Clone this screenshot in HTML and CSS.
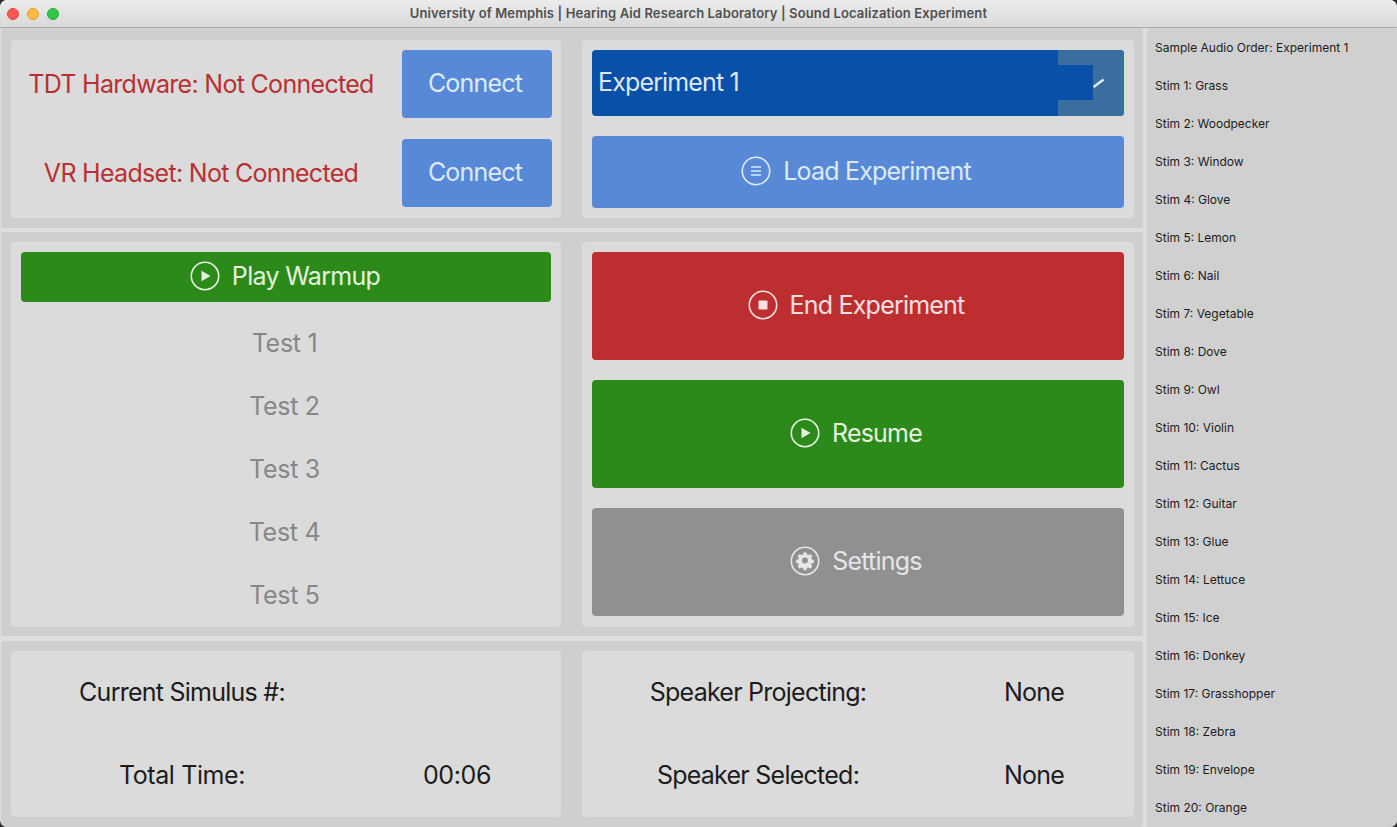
FILE: index.html
```html
<!DOCTYPE html>
<html lang="en">
<head>
<meta charset="utf-8">
<title>Sound Localization Experiment</title>
<link rel="stylesheet" href="styles.css">
</head>
<body>
<div class="window">
  <header class="titlebar">
    <div class="lights"><span class="light red"></span><span class="light yellow"></span><span class="light green"></span></div>
    <div class="title">University of Memphis | Hearing Aid Research Laboratory | Sound Localization Experiment</div>
  </header>
  <div class="content">
    <main class="main">
      <section class="panel panel-top">
        <div class="card conn">
          <div class="status">TDT Hardware: Not Connected</div>
          <button class="btn blue">Connect</button>
          <div class="status">VR Headset: Not Connected</div>
          <button class="btn blue">Connect</button>
        </div>
        <div class="card exp">
          <div class="select">
            <span class="select-text">Experiment 1</span>
            <span class="select-arrow"><span class="arrow-block"></span><svg class="arrow-mark" width="11" height="10" viewBox="0 0 11 10"><path d="M0.5 9 L10.5 1.5" stroke="#dfeafa" stroke-width="2.4"/></svg></span>
          </div>
          <button class="btn blue load">
            <svg class="ico" viewBox="0 0 30 30"><circle cx="15" cy="15" r="13.7" fill="none" stroke="currentColor" stroke-width="1.6"/><path d="M10 11h10M10 15h10M10 19h10" stroke="currentColor" stroke-width="1.7" fill="none"/></svg>
            Load Experiment
          </button>
        </div>
      </section>
      <section class="panel panel-mid">
        <div class="card tests">
          <button class="btn green warmup">
            <svg class="ico" viewBox="0 0 30 30"><circle cx="15" cy="15" r="13.7" fill="none" stroke="currentColor" stroke-width="1.6"/><path d="M11.5 9.8 L20.5 15 L11.5 20.2 Z" fill="currentColor"/></svg>
            Play Warmup
          </button>
          <div class="test-list">
            <div class="test">Test 1</div>
            <div class="test">Test 2</div>
            <div class="test">Test 3</div>
            <div class="test">Test 4</div>
            <div class="test">Test 5</div>
          </div>
        </div>
        <div class="card actions">
          <button class="btn red-btn">
            <svg class="ico" viewBox="0 0 30 30"><circle cx="15" cy="15" r="13.7" fill="none" stroke="currentColor" stroke-width="1.6"/><rect x="10.5" y="10.5" width="9" height="9" rx="1" fill="currentColor"/></svg>
            End Experiment
          </button>
          <button class="btn green">
            <svg class="ico" viewBox="0 0 30 30"><circle cx="15" cy="15" r="13.7" fill="none" stroke="currentColor" stroke-width="1.6"/><path d="M11.5 9.8 L20.5 15 L11.5 20.2 Z" fill="currentColor"/></svg>
            Resume
          </button>
          <button class="btn gray">
            <svg class="ico" viewBox="0 0 30 30"><circle cx="15" cy="15" r="13.7" fill="none" stroke="currentColor" stroke-width="1.6"/><path fill="currentColor" fill-rule="evenodd" d="M13.3 6.5h3.4l.5 2.4 1.5.6 2.1-1.3 2.4 2.4-1.3 2.1.6 1.5 2.4.5v3.4l-2.4.5-.6 1.5 1.3 2.1-2.4 2.4-2.1-1.3-1.5.6-.5 2.4h-3.4l-.5-2.4-1.5-.6-2.1 1.3-2.4-2.4 1.3-2.1-.6-1.5-2.4-.5v-3.4l2.4-.5.6-1.5-1.3-2.1 2.4-2.4 2.1 1.3 1.5-.6zM15 12.2a3.3 3.3 0 1 0 0 6.6a3.3 3.3 0 1 0 0-6.6z" transform="translate(1.5 0.6) scale(0.9)"/></svg>
            Settings
          </button>
        </div>
      </section>
      <section class="panel panel-bottom">
        <div class="card readout readout-left">
          <div class="rd">Current Simulus #:</div><div class="rd"></div>
          <div class="rd rd-loose">Total Time:</div><div class="rd rd-loose">00:06</div>
        </div>
        <div class="card readout readout-right">
          <div class="rd">Speaker Projecting:</div><div class="rd">None</div>
          <div class="rd">Speaker Selected:</div><div class="rd">None</div>
        </div>
      </section>
    </main>
    <aside class="sidebar">
      <div class="stim">Sample Audio Order: Experiment 1</div>
      <div class="stim">Stim 1: Grass</div>
      <div class="stim">Stim 2: Woodpecker</div>
      <div class="stim">Stim 3: Window</div>
      <div class="stim">Stim 4: Glove</div>
      <div class="stim">Stim 5: Lemon</div>
      <div class="stim">Stim 6: Nail</div>
      <div class="stim">Stim 7: Vegetable</div>
      <div class="stim">Stim 8: Dove</div>
      <div class="stim">Stim 9: Owl</div>
      <div class="stim">Stim 10: Violin</div>
      <div class="stim">Stim 11: Cactus</div>
      <div class="stim">Stim 12: Guitar</div>
      <div class="stim">Stim 13: Glue</div>
      <div class="stim">Stim 14: Lettuce</div>
      <div class="stim">Stim 15: Ice</div>
      <div class="stim">Stim 16: Donkey</div>
      <div class="stim">Stim 17: Grasshopper</div>
      <div class="stim">Stim 18: Zebra</div>
      <div class="stim">Stim 19: Envelope</div>
      <div class="stim">Stim 20: Orange</div>
    </aside>
  </div>
</div>
</body>
</html>
```
FILE: styles.css
```css
* { box-sizing: border-box; }
html, body { margin: 0; height: 100%; background: #2a2a2a; overflow: hidden; }
body { font-family: Inter, "Liberation Sans", sans-serif; color: #1c1c1c; }

.window {
  width: 1397px; height: 827px; display: flex; flex-direction: column;
  background: #dedede; border-radius: 7px; overflow: hidden;
}

.titlebar {
  height: 28px; flex: none; position: relative; display: flex; align-items: center; justify-content: center;
  padding-bottom: 2px;
  background: linear-gradient(#ececec, #d9d9d9); border-bottom: 1px solid #a9a9a9;
}
.lights { position: absolute; left: 7px; top: 8px; display: flex; gap: 8px; }
.light { width: 12px; height: 12px; border-radius: 50%; }
.light.red { background: #fc5753; border: 1px solid #df4744; }
.light.yellow { background: #fdbc40; border: 1px solid #de9f34; }
.light.green { background: #33c748; border: 1px solid #27aa35; }
.title { font-size: 13px; font-weight: 600; color: #505050; letter-spacing: 0.12px; white-space: nowrap; }

.content { flex: 1; display: flex; min-height: 0; }
.main { width: 1142px; margin-left: 1px; flex: none; display: flex; flex-direction: column; }
.panel { display: grid; grid-template-columns: 550px 552px; column-gap: 21px; background: #cfcfcf; border-radius: 3px; padding: 0 9px 0 10px; }
.panel-top { height: 200px; padding-top: 12px; padding-bottom: 10px; }
.panel-mid { height: 404px; margin-top: 4px; padding-top: 10px; padding-bottom: 10px; }
.panel-bottom { height: 186px; margin-top: 5px; padding-top: 10px; padding-bottom: 10px; }
.card { background: #dbdbdb; border-radius: 4px; }

.btn {
  font: inherit; font-size: 25px; font-weight: 420; border: 0; border-radius: 4px; display: flex; align-items: center; justify-content: center;
  gap: 12px; padding: 0 4px 2px 0; letter-spacing: -0.8px;
}
.blue { background: #5789d6; color: #dde9fb; }
.green { background: #2c8a1b; color: #e4f2df; }
.red-btn { background: #bd2e30; color: #fae0e0; }
.gray { background: #909090; color: #e6e6e6; }
.ico { width: 30px; height: 30px; flex: none; }

.conn { display: grid; grid-template-columns: 380px 150px; grid-template-rows: 68px 68px; row-gap: 21px; column-gap: 11px; padding-top: 10px; }
.status { color: #b83033; font-size: 25px; font-weight: 420; letter-spacing: -0.7px; display: flex; align-items: center; justify-content: center; white-space: nowrap; }

.exp { padding: 10px; display: flex; flex-direction: column; gap: 20px; }
.select { height: 66px; background: #0850a8; border-radius: 4px; display: flex; align-items: center; overflow: hidden; color: #dde9fb; font-size: 25px; font-weight: 420; letter-spacing: -0.85px; }
.select-text { flex: 1; padding: 0 0 2px 6px; }
.select-arrow { width: 66px; height: 100%; background: #3a6e9e; display: flex; align-items: center; }
.arrow-block { width: 35px; height: 35px; margin-top: -1px; background: #0850a8; }
.arrow-mark { flex: none; margin-top: -1px; }
.load { height: 72px; }

.tests { padding: 10px 10px 0; display: flex; flex-direction: column; }
.warmup { height: 50px; flex: none; padding-right: 2px; letter-spacing: -0.7px; }
.test-list { margin-top: 10px; display: grid; grid-auto-rows: 63px; }
.test { display: flex; align-items: center; justify-content: center; padding: 0 3px 2px 0; color: #878787; font-size: 25px; font-weight: 420; letter-spacing: -0.3px; }

.actions { padding: 10px; display: grid; grid-template-rows: repeat(3, 108px); row-gap: 20px; }

.readout { display: grid; grid-template-rows: 83px 83px; font-size: 25px; font-weight: 420; letter-spacing: -0.75px; }
.readout-left { grid-template-columns: 342px 1fr; }
.readout-right { grid-template-columns: 352px 1fr; }
.rd { display: flex; align-items: center; justify-content: center; padding-bottom: 2px; white-space: nowrap; }
.rd-loose { letter-spacing: -0.4px; }

.sidebar { flex: 1; margin-left: 4px; background: #d0d0d0; border-radius: 3px 3px 0 0; padding-left: 8px; }
.stim { height: 38px; display: flex; align-items: center; font-size: 12px; color: #1c1c1c; white-space: nowrap; }
```
